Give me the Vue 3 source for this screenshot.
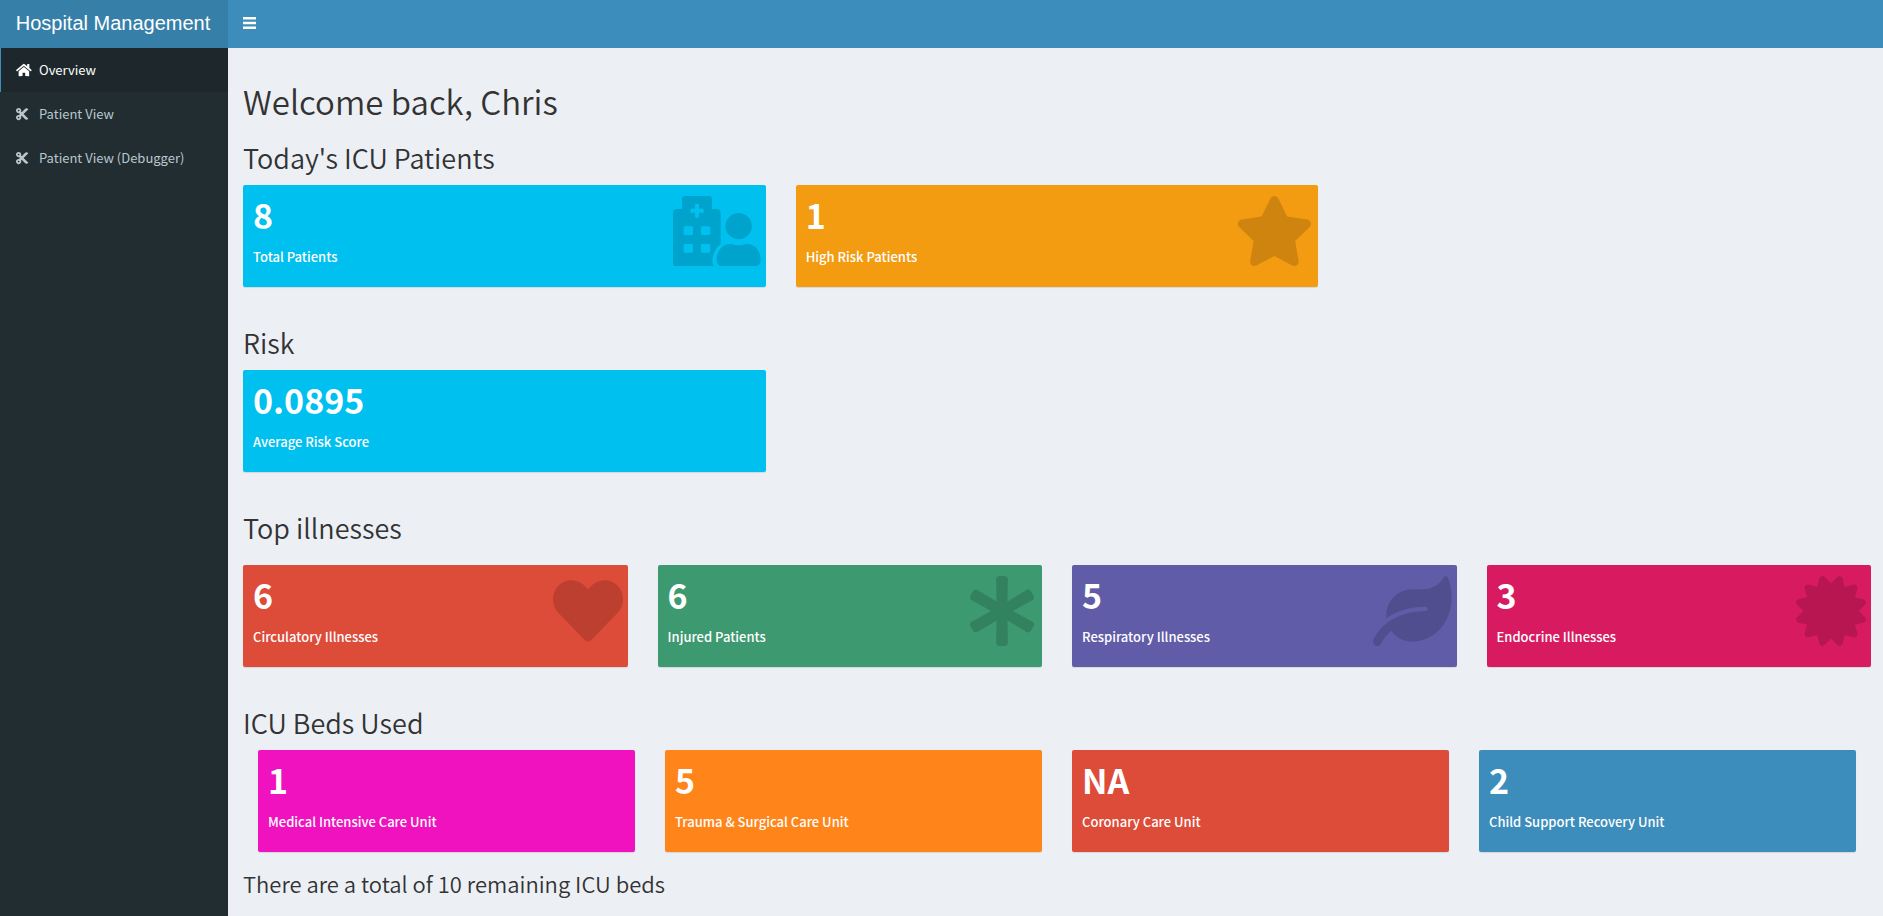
<script setup>
const navItems = [
  { label: 'Overview', icon: 'home', active: true },
  { label: 'Patient View', icon: 'cut', active: false },
  { label: 'Patient View (Debugger)', icon: 'cut', active: false },
]

const icons = {
  home: {
    box: '0 0 576 512',
    d: 'M280.37 148.26L96 300.11V464a16 16 0 0 0 16 16l112.06-.29a16 16 0 0 0 15.92-16V368a16 16 0 0 1 16-16h64a16 16 0 0 1 16 16v95.64a16 16 0 0 0 16 16.05L464 480a16 16 0 0 0 16-16V300L295.67 148.26a12.19 12.19 0 0 0-15.3 0zM571.6 251.47L488 182.56V44.05a12 12 0 0 0-12-12h-56a12 12 0 0 0-12 12v72.61L318.47 43a48 48 0 0 0-61 0L4.34 251.47a12 12 0 0 0-1.6 16.9l25.5 31A12 12 0 0 0 45.15 301l235.22-193.74a12.19 12.19 0 0 1 15.3 0L530.9 301a12 12 0 0 0 16.9-1.6l25.5-31a12 12 0 0 0-1.7-16.93z',
  },
  cut: {
    box: '0 0 448 512',
    d: 'M278.06 256L444.48 89.57c4.69-4.69 4.69-12.29 0-16.97-32.8-32.8-85.99-32.8-118.79 0L210.18 188.12l-24.86-24.86c4.31-10.92 6.68-22.81 6.68-35.26 0-53.02-42.98-96-96-96S0 74.98 0 128s42.98 96 96 96c4.54 0 8.99-.32 13.36-.93L142.29 256l-32.93 32.93c-4.37-.61-8.83-.93-13.36-.93-53.02 0-96 42.98-96 96s42.98 96 96 96 96-42.98 96-96c0-12.45-2.37-24.34-6.68-35.26l24.86-24.86L325.69 439.4c32.8 32.8 85.99 32.8 118.79 0 4.69-4.68 4.69-12.28 0-16.97L278.06 256zM96 160c-17.64 0-32-14.36-32-32s14.36-32 32-32 32 14.36 32 32-14.36 32-32 32zm0 256c-17.64 0-32-14.36-32-32s14.36-32 32-32 32 14.36 32 32-14.36 32-32 32z',
  },
  hospital: {
    box: '0 0 263 210',
    d: 'M27 39V10Q27 0 37 0H107Q117 0 117 10V39H131Q143 39 143 51V144Q119 164 118 194Q118 203 123 210H6Q0 210 0 204V51Q0 39 12 39ZM69 24Q66 24 66 27V38H55Q52 38 52 41V47Q52 50 55 50H66V62Q66 65 69 65H75Q78 65 78 62V50H89Q92 50 92 47V41Q92 38 89 38H78V27Q78 24 75 24ZM36 91Q32 91 32 95V113Q32 117 36 117H56Q60 117 60 113V95Q60 91 56 91ZM88 91Q84 91 84 95V113Q84 117 88 117H108Q112 117 112 113V95Q112 91 108 91ZM36 144Q32 144 32 148V166Q32 170 36 170H56Q60 170 60 166V148Q60 144 56 144ZM88 144Q84 144 84 148V166Q84 170 88 170H108Q112 170 112 166V148Q112 144 108 144ZM197 51A39.500 39.500 0 1 1 196.900 51ZM171 144H175Q197 152 219 144H223C246 144 263 165 263 191Q263 210 246 210H148Q131 210 131 191C131 165 148 144 171 144Z',
  },
  star: {
    box: '0 0 576 512',
    d: 'M259.3 17.8L194 150.2 47.9 171.5c-26.2 3.8-36.7 36.1-17.7 54.6l105.7 103-25 145.5c-4.5 26.3 23.2 46 46.4 33.7L288 439.6l130.7 68.7c23.2 12.2 50.9-7.4 46.4-33.7l-25-145.5 105.7-103c19-18.5 8.5-50.8-17.7-54.6L382 150.2 316.7 17.8c-11.7-23.6-45.6-23.9-57.4 0z',
  },
  heart: {
    box: '0 0 512 512',
    d: 'M462.3 62.6C407.5 15.9 326 24.3 275.7 76.2L256 96.5l-19.7-20.3C186.1 24.3 104.5 15.9 49.7 62.6c-62.8 53.6-66.1 149.8-9.9 207.9l193.5 199.8c12.5 12.9 32.8 12.9 45.3 0l193.5-199.8c56.3-58.1 53-154.3-9.8-207.9z',
  },
  asterisk: {
    box: '0 0 512 512',
    d: 'M478.21 334.093L336 256l142.21-78.093c11.795-6.477 15.961-21.384 9.232-33.037l-19.48-33.741c-6.728-11.653-21.72-15.499-33.227-8.523L296 186.718l3.475-162.204C299.763 11.061 288.937 0 275.48 0h-38.96c-13.456 0-24.283 11.061-23.994 24.514L216 186.718 77.265 102.607c-11.506-6.976-26.499-3.13-33.227 8.523l-19.48 33.741c-6.728 11.653-2.562 26.56 9.233 33.037L176 256 33.79 334.093c-11.795 6.477-15.961 21.384-9.232 33.037l19.48 33.741c6.728 11.653 21.721 15.499 33.227 8.523L216 325.282l-3.475 162.204C212.237 500.939 223.064 512 236.52 512h38.961c13.456 0 24.283-11.061 23.995-24.514L296 325.282l138.735 84.111c11.506 6.976 26.499 3.13 33.227-8.523l19.48-33.741c6.728-11.653 2.563-26.559-9.232-33.036z',
  },
  leaf: {
    box: '0 0 576 512',
    d: 'M546.2 9.7c-5.6-12.5-21.6-13-28.3-1.2C486.9 62.4 431.4 96 368 96h-80C182 96 96 182 96 288c0 7 .8 13.7 1.5 20.5C161.3 262.8 253.4 224 384 224c8.8 0 16 7.2 16 16s-7.2 16-16 16C132.6 256 26 410.1 2.4 468c-6.6 16.3 1.2 34.9 17.5 41.6 16.4 6.8 35-1.1 41.8-17.3 1.5-3.6 20.9-47.9 71.9-90.6 32.4 43.9 94 85.8 174.9 77.2C465.5 467.5 576 326.7 576 154.3c0-50.2-10.8-102.2-29.8-144.6z',
  },
  certificate: {
    box: '0 0 512 512',
    d: 'M458.622 255.92l45.985-45.005c13.708-12.977 7.316-36.039-10.664-40.339l-62.65-15.99 17.661-62.015c4.991-17.838-11.829-34.663-29.661-29.671l-61.994 17.667-15.984-62.671C337.085.197 313.765-6.276 300.99 7.228L256 53.57 211.011 7.229c-12.63-13.351-36.047-7.234-40.325 10.668l-15.984 62.671-61.995-17.667C74.87 57.907 58.056 74.738 63.046 92.572l17.661 62.015-62.65 15.99C.069 174.878-6.31 197.944 7.392 210.915l45.985 45.005-45.985 45.004c-13.708 12.977-7.316 36.039 10.664 40.339l62.65 15.99-17.661 62.015c-4.991 17.838 11.829 34.663 29.661 29.671l61.994-17.667 15.984 62.671c4.439 18.575 27.696 24.018 40.325 10.668L256 458.61l44.989 46.001c12.5 13.488 35.987 7.486 40.325-10.668l15.984-62.671 61.994 17.667c17.836 4.994 34.651-11.837 29.661-29.671l-17.661-62.015 62.65-15.99c17.987-4.302 24.366-27.367 10.664-40.339l-45.984-45.004z',
  },
}

const sections = [
  {
    title: "Today's ICU Patients",
    layout: 'thirds',
    cards: [
      { value: '8', label: 'Total Patients', color: 'aqua', icon: 'hospital' },
      { value: '1', label: 'High Risk Patients', color: 'yellow', icon: 'star' },
    ],
  },
  {
    title: 'Risk',
    layout: 'thirds',
    cards: [{ value: '0.0895', label: 'Average Risk Score', color: 'aqua' }],
  },
  {
    title: 'Top illnesses',
    layout: 'quarters spaced',
    cards: [
      { value: '6', label: 'Circulatory Illnesses', color: 'red', icon: 'heart' },
      { value: '6', label: 'Injured Patients', color: 'olive', icon: 'asterisk' },
      { value: '5', label: 'Respiratory Illnesses', color: 'purple', icon: 'leaf' },
      { value: '3', label: 'Endocrine Illnesses', color: 'maroon', icon: 'certificate' },
    ],
  },
  {
    title: 'ICU Beds Used',
    layout: 'quarters inset',
    cards: [
      { value: '1', label: 'Medical Intensive Care Unit', color: 'fuchsia' },
      { value: '5', label: 'Trauma & Surgical Care Unit', color: 'orange' },
      { value: 'NA', label: 'Coronary Care Unit', color: 'red' },
      { value: '2', label: 'Child Support Recovery Unit', color: 'blue' },
    ],
  },
]
</script>

<template>
  <div class="app">
    <header class="topbar">
      <a class="brand" href="#">Hospital Management</a>
      <button class="toggle" type="button" aria-label="Toggle navigation">
        <svg viewBox="0 0 13 12" aria-hidden="true">
          <path d="M0 0h13v2.500h-13zM0 4.750h13v2.500h-13zM0 9.500h13v2.500h-13z" />
        </svg>
      </button>
    </header>
    <div class="body">
      <nav class="sidebar">
        <a
          v-for="item in navItems"
          :key="item.label"
          href="#"
          class="nav-link"
          :class="{ active: item.active }"
        >
          <svg class="nav-icon" :viewBox="icons[item.icon].box" preserveAspectRatio="xMinYMid meet" aria-hidden="true">
            <path :d="icons[item.icon].d" />
          </svg>
          <span>{{ item.label }}</span>
        </a>
      </nav>
      <main class="content">
        <h1>Welcome back, Chris</h1>
        <section v-for="section in sections" :key="section.title" class="section">
          <h2>{{ section.title }}</h2>
          <div class="cards" :class="section.layout">
            <article v-for="card in section.cards" :key="card.label" class="card" :class="card.color">
              <div class="value">{{ card.value }}</div>
              <p class="label">{{ card.label }}</p>
              <svg v-if="card.icon" class="card-icon" :viewBox="icons[card.icon].box" aria-hidden="true">
                <path fill-rule="evenodd" :d="icons[card.icon].d" />
              </svg>
            </article>
          </div>
        </section>
        <h3>There are a total of 10 remaining ICU beds</h3>
      </main>
    </div>
  </div>
</template>

<style>
body {
  margin: 0;
  background: #ecf0f5;
}
</style>

<style scoped>
.app {
  display: flex;
  flex-direction: column;
  min-height: 100vh;
  color: #333;
  font-family: "Noto Sans CJK SC", "Noto Sans", sans-serif;
}
.topbar {
  display: flex;
  height: 48px;
  background: #3c8dbc;
}
.brand {
  box-sizing: border-box;
  width: 228px;
  padding-right: 2px;
  background: #367fa9;
  color: #fff;
  font: 20px/46px "Liberation Sans", Arial, sans-serif;
  text-align: center;
  text-decoration: none;
  white-space: nowrap;
}
.toggle {
  display: flex;
  align-items: center;
  padding: 0 15px 2px;
  border: 0;
  background: transparent;
  cursor: pointer;
}
.toggle svg {
  width: 13px;
  height: 12px;
  fill: #fff;
}
.body {
  display: flex;
  flex: 1;
}
.sidebar {
  flex: 0 0 228px;
  background: #222d32;
}
.nav-link {
  display: flex;
  align-items: center;
  gap: 7px;
  height: 44px;
  padding-left: 15px;
  border-left: 1px solid transparent;
  color: #b8c7ce;
  font-size: 13px;
  line-height: 20px;
  text-decoration: none;
  white-space: nowrap;
}
.nav-link.active {
  border-left-color: #3c8dbc;
  background: #1e282c;
  color: #fff;
}
.nav-icon {
  width: 16px;
  height: 14px;
  fill: currentColor;
}
.content {
  flex: 1;
  min-width: 0;
  padding: 33px 12px 16px 15px;
}
h1,
h2,
h3 {
  margin: 0;
  font-weight: 350;
}
h1 {
  margin-bottom: 20px;
  font-size: 33px;
  line-height: 40px;
}
h2 {
  margin-bottom: 11px;
  font-size: 27px;
  line-height: 33px;
}
h3 {
  margin-top: 18px;
  font-size: 22px;
  line-height: 26px;
}
.section + .section {
  margin-top: 39px;
}
.cards {
  display: grid;
  gap: 30px;
}
.thirds {
  grid-template-columns: repeat(3, 1fr);
}
.quarters {
  grid-template-columns: repeat(4, 1fr);
}
.spaced {
  margin-top: 21px;
}
.inset {
  margin: 0 15px;
}
.card {
  position: relative;
  box-sizing: border-box;
  min-height: 102px;
  padding: 11px 10px 10px;
  border-radius: 2px;
  box-shadow: 0 1px 1px rgba(0, 0, 0, 0.1);
  color: #fff;
}
.value {
  font-size: 34px;
  font-weight: 700;
  line-height: 38px;
}
.label {
  margin: 13px 0 0;
  font-size: 13px;
  font-weight: 500;
  line-height: 20px;
}
.card-icon {
  position: absolute;
  top: 11px;
  right: 5px;
  height: 70px;
  fill: rgba(0, 0, 0, 0.15);
}
.aqua { background: #00c0ef; }
.yellow { background: #f39c12; }
.red { background: #dd4b39; }
.olive { background: #3d9970; }
.purple { background: #605ca8; }
.maroon { background: #d81b60; }
.fuchsia { background: #f012be; }
.orange { background: #ff851b; }
.blue { background: #3c8dbc; }
</style>
